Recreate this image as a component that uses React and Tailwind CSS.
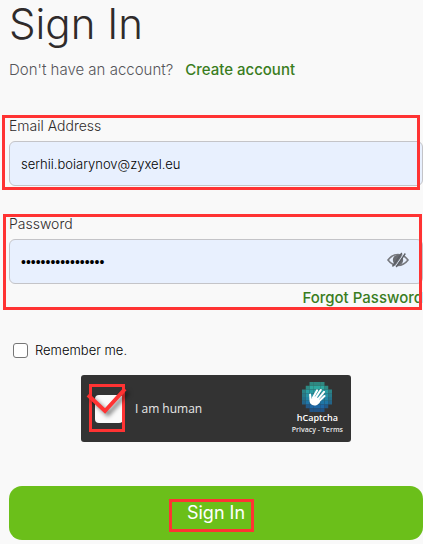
import { useState } from 'react'

// columns of filled cells per row of the 8x8 hCaptcha mosaic
const MOSAIC = [
  { from: 2, to: 5, color: '#2fa79c' },
  { from: 1, to: 6, color: '#2ea89f' },
  { from: 0, to: 7, color: '#2a9da3' },
  { from: 0, to: 7, color: '#2692a5' },
  { from: 0, to: 7, color: '#2286a6' },
  { from: 0, to: 7, color: '#1f76a6' },
  { from: 1, to: 6, color: '#1d67a5' },
  { from: 2, to: 5, color: '#1c5fa2' },
]

const CaptchaLogo = () => (
  <svg viewBox="0 0 32 32" className="w-[30px] h-[30px]" aria-hidden="true">
    {MOSAIC.map((row, y) =>
      Array.from({ length: row.to - row.from + 1 }, (_, i) => {
        const x = row.from + i
        const edge = x === row.from || x === row.to || y === 0 || y === 7
        return (
          <rect
            key={`${x}-${y}`}
            x={x * 4}
            y={y * 4}
            width="4"
            height="4"
            fill={row.color}
            opacity={edge ? 0.75 : 1}
          />
        )
      })
    )}
    <g fill="none" stroke="#fff" strokeWidth="2.2" strokeLinecap="round">
      <path d="M11.500 17 16 9" />
      <path d="M14 17.500 20 8.500" />
      <path d="M16.500 19 23.500 10.500" />
      <path d="M17.500 21 24 15" />
      <path d="M9.300 19 8.600 13.500" />
    </g>
    <path
      d="M8.200 15.500c.3 2-.8 4.700.4 7 1.300 2.600 4.800 3.400 7.400 2 1.700-.9 2.500-2.200 3.300-3.500l-1.800-4-4.500-1.500-2.500 2.500z"
      fill="#fff"
    />
  </svg>
)

const EyeOffIcon = () => (
  <svg viewBox="0 0 22 16" className="w-[22px] h-4" aria-hidden="true">
    <path
      d="M1 8c5.500-7.300 14.500-7.300 20 0-5.500 7.300-14.500 7.300-20 0z"
      fill="none"
      stroke="#77797e"
      strokeWidth="1.600"
    />
    <circle cx="11" cy="8" r="5.200" fill="#6b6d72" />
    <path d="M8 15 17 2" stroke="#e8f0fe" strokeWidth="1.200" />
    <path d="M5.500 14.500 14.800 1M9.200 15 18.300 1.500" stroke="#5c5f66" strokeWidth="1.400" />
  </svg>
)

const CheckMark = () => (
  <svg
    viewBox="0 0 44 32"
    className="absolute left-[5px] top-3 w-11 h-8 drop-shadow-[3px_3px_2px_rgba(0,0,0,0.5)]"
    aria-hidden="true"
  >
    <path d="M2 8 19 24 39 2" fill="none" stroke="#ff3333" strokeWidth="4" />
  </svg>
)

const inputClass =
  'block w-full h-[45px] rounded-md border border-[#c4c4c8] bg-[#e8f0fe] px-[11px] text-black outline-none'

const App = () => {
  const [email, setEmail] = useState('serhii.boiarynov@zyxel.eu')
  const [password, setPassword] = useState('correcthorsebatte')
  const [showPassword, setShowPassword] = useState(false)

  return (
    <div className="min-h-screen bg-[#f9f9f9] pl-[9px] pb-1 font-['Inter',sans-serif] text-[#2f2b2b]">
      <h1 className="text-[42px] leading-12 font-light">Sign In</h1>

      <p className="mt-3 flex gap-3 text-[15px] leading-5 font-light text-[#55555a]">
        Don't have an account?
        <a href="#create" className="font-medium text-[#3a7d1e]">Create account</a>
      </p>

      <form onSubmit={(e) => e.preventDefault()}>
        <div className="relative mt-9">
          <label htmlFor="email" className="block pb-[5px] text-[14px] leading-5 font-light">Email Address</label>
          <input
            id="email"
            type="email"
            value={email}
            onChange={(e) => setEmail(e.target.value)}
            className={`${inputClass} text-[13px] font-light`}
          />
          <div className="pointer-events-none absolute -top-px -left-[7px] right-[3px] -bottom-1 border-3 border-[#ff3333]" />
        </div>

        <div className="relative mt-7">
          <label htmlFor="password" className="block pb-[5px] text-[14px] leading-5 font-light">Password</label>
          <div className="relative">
            <input
              id="password"
              type={showPassword ? 'text' : 'password'}
              value={password}
              onChange={(e) => setPassword(e.target.value)}
              className={`${inputClass} font-['Liberation_Sans',sans-serif] text-[14px]`}
            />
            <button
              type="button"
              aria-label="Show password"
              onClick={() => setShowPassword(!showPassword)}
              className="absolute right-[14px] top-[13px]"
            >
              <EyeOffIcon />
            </button>
          </div>
          <div className="flex justify-end pt-1">
            <a href="#forgot" className="text-[15px] leading-5 font-medium text-[#3a7d1e]">Forgot Password</a>
          </div>
          <div className="pointer-events-none absolute top-0 -left-[6px] right-px -bottom-[2px] border-3 border-[#ff3333]" />
        </div>

        <label className="mt-8 ml-1 flex items-center gap-[7px] text-[13px] leading-5 font-light text-black">
          <input
            type="checkbox"
            className="size-[15px] appearance-none rounded-[3px] border border-[#767676] bg-white checked:bg-[#6bbf1a]"
          />
          Remember me.
        </label>

        <div className="relative mx-auto mt-[15px] flex h-[67px] w-[270px] items-center rounded-[3px] bg-[#333] font-['Open_Sans',sans-serif] text-[#e8e8e8]">
          <input
            id="human"
            type="checkbox"
            className="ml-[14px] size-7 appearance-none rounded-sm bg-[#fafafa]"
          />
          <label htmlFor="human" className="ml-3 text-[12px]">I am human</label>
          <div className="ml-auto mr-2 flex flex-col items-center">
            <CaptchaLogo />
            <span className="text-[9px] leading-3 font-semibold text-white">hCaptcha</span>
            <span className="text-[7px] leading-3 font-semibold">
              <a href="#privacy">Privacy</a> - <a href="#terms">Terms</a>
            </span>
          </div>
          <div className="pointer-events-none absolute left-2 top-[9px] h-12 w-9 border-3 border-[#ff3333]" />
          <CheckMark />
        </div>

        <button
          type="submit"
          className="mt-11 flex h-[54px] w-full items-center justify-center rounded-[13px] bg-[#6bbf1a] text-[18px] leading-6 text-white"
        >
          <span className="relative block">
            Sign In
            <span className="pointer-events-none absolute -left-[18px] -right-[9px] -top-[2px] -bottom-[7px] border-3 border-[#ff3333]" />
          </span>
        </button>
      </form>
    </div>
  )
}

export default App
